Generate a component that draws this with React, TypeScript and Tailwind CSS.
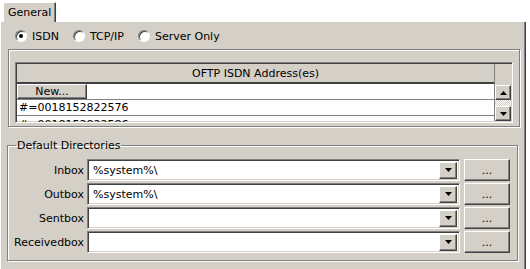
import React from "react";

const font = { fontFamily: '"DejaVu Sans", Verdana, sans-serif' };

// raised win2k bevel
const raised =
  "bg-[#d4d0c8] border border-t-white border-l-white border-r-[#404040] border-b-[#404040] shadow-[inset_-1px_-1px_0_#808080]";
// sunken win2k bevel
const sunken =
  "border border-t-[#808080] border-l-[#808080] border-r-white border-b-white shadow-[inset_1px_1px_0_#404040,inset_-1px_-1px_0_#d4d0c8]";

function Radio({ label, checked }: { label: string; checked?: boolean }) {
  return (
    <label className="flex items-center gap-[5px]">
      <span className="w-[12px] h-[12px] rounded-full bg-white border border-t-[#808080] border-l-[#808080] border-r-white border-b-white shadow-[inset_1px_1px_0_#404040] flex items-center justify-center">
        {checked && <span className="w-[4px] h-[4px] rounded-full bg-black" />}
      </span>
      <span>{label}</span>
    </label>
  );
}

function Arrow({ up }: { up?: boolean }) {
  return (
    <svg width="7" height="4" viewBox="0 0 7 4">
      {up ? <polygon points="0,4 7,4 3.5,0" fill="#000" /> : <polygon points="0,0 7,0 3.5,4" fill="#000" />}
    </svg>
  );
}

function DirRow({ label, value }: { label: string; value?: string }) {
  return (
    <div className="flex items-center h-[22px]">
      <span className="w-[79px] text-right pr-[3px]">{label}</span>
      <div className={`w-[373px] h-[22px] bg-white flex items-center ${sunken} p-[2px]`}>
        <span className="flex-1 pl-[3px]">{value}</span>
        <div className={`w-[18px] h-[17px] ${raised} flex items-center justify-center`}>
          <Arrow />
        </div>
      </div>
      <button className={`ml-[4px] w-[46px] h-[22px] ${raised} flex items-center justify-center pt-[1px]`}>
        ...
      </button>
    </div>
  );
}

export default function App() {
  return (
    <div className="w-[530px] h-[269px] bg-white flex flex-col text-[11px] text-black leading-none" style={font}>
      {/* Tab strip */}
      <div className="h-[22px] flex items-end pl-[3px]">
        <div className="h-[20px] px-[4px] bg-[#d4d0c8] border-l border-t border-white border-r border-r-[#404040] shadow-[inset_-1px_0_0_#808080] flex items-center">
          General
        </div>
      </div>

      {/* Panel */}
      <div className="w-[526px] flex-1 bg-[#d4d0c8] border-r border-r-[#404040] shadow-[inset_1px_0_0_white,inset_-1px_0_0_#808080] flex flex-col">
        <div className="flex items-center gap-[14px] pl-[15px] mt-[6px] h-[16px]">
          <Radio label="ISDN" checked />
          <Radio label="TCP/IP" />
          <Radio label="Server Only" />
        </div>

        {/* Address list box */}
        <div className="ml-[8px] mt-[5px] w-[512px] h-[78px] border border-[#808080] shadow-[inset_1px_1px_0_white,1px_1px_0_white] pt-[12px] px-[6px]">
          <div className={`w-[498px] h-[61px] bg-white ${sunken} p-[1px] flex overflow-hidden`}>
            <div className="flex-1 flex flex-col">
              <div className="h-[20px] shrink-0 bg-[#d4d0c8] border-b-2 border-b-[#404040] flex items-center justify-center">
                OFTP ISDN Address(es)
              </div>
              <div className="h-[16px] shrink-0 flex border-b border-b-[#808080]">
                <div className={`w-[70px] h-full ${raised} flex items-center justify-center`}>New...</div>
              </div>
              <div className="h-[16px] shrink-0 flex items-center pl-[2px] border-b border-b-[#808080]">
                #=0018152822576
              </div>
              <div className="h-[16px] shrink-0 flex items-center pl-[2px]">#=0018152822586</div>
            </div>
            <div className="w-[17px] flex flex-col bg-white border-l border-l-[#808080]">
              <div className="h-[21px] bg-[#d4d0c8] shrink-0" />
              <div className={`h-[15px] ${raised} flex items-center justify-center shrink-0`}>
                <Arrow up />
              </div>
              <div className="flex-1 bg-[repeating-conic-gradient(#d4d0c8_0_25%,white_0_50%)] bg-[length:2px_2px]" />
              <div className={`h-[15px] ${raised} flex items-center justify-center shrink-0`}>
                <Arrow />
              </div>
            </div>
          </div>
        </div>

        {/* Default Directories */}
        <fieldset className="ml-[7px] mt-[13px] w-[511px] h-[121px] border border-[#808080] shadow-[inset_1px_1px_0_white,1px_1px_0_white] flex flex-col">
          <legend className="ml-[8px] px-[1px]">Default Directories</legend>
          <div className="flex flex-col gap-[2px] mt-[8px]">
            <DirRow label="Inbox" value="%system%\" />
            <DirRow label="Outbox" value="%system%\" />
            <DirRow label="Sentbox" />
            <DirRow label="Receivedbox" />
          </div>
        </fieldset>
      </div>
    </div>
  );
}
